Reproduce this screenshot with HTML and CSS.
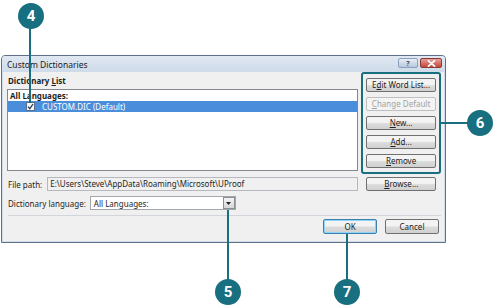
FILE: index.html
```html
<!DOCTYPE html>
<html lang="en">
<head>
    <meta charset="UTF-8">
    <meta name="viewport" content="width=device-width, initial-scale=1.0">
    <title>Custom Dictionaries</title>
    <link rel="stylesheet" href="styles.css">
</head>
<body>
    <div class="page">
        <div class="dialog">
            <div class="titlebar">
                <span class="title">Custom Dictionaries</span>
                <div class="caption-btns">
                    <span class="cap help">?</span>
                    <span class="cap close">
                        <svg width="9" height="7" viewBox="0 0 9 7"><path d="M1.5 0.8 L7.5 6.2 M7.5 0.8 L1.5 6.2" stroke="#fff" stroke-width="1.8" stroke-linecap="round"/></svg>
                    </span>
                </div>
            </div>

            <div class="client">
                <div class="main">
                    <div class="left">
                        <div class="group-label">Dictionary <u>L</u>ist</div>
                        <div class="listbox">
                            <div class="list-head">All Languages:</div>
                            <div class="list-item selected">
                                <span class="check">
                                    <svg width="7" height="7" viewBox="0 0 7 7"><path d="M1 3.6 L2.8 5.6 L6 1" fill="none" stroke="#2b3a55" stroke-width="1.3"/></svg>
                                </span>
                                CUSTOM.DIC (Default)
                            </div>
                        </div>
                    </div>
                    <div class="side">
                        <button class="btn">E<u>d</u>it Word List...</button>
                        <button class="btn" disabled><u>C</u>hange Default</button>
                        <button class="btn"><u>N</u>ew...</button>
                        <button class="btn"><u>A</u>dd...</button>
                        <button class="btn"><u>R</u>emove</button>
                    </div>
                </div>

                <div class="row path-row">
                    <span class="label">File path:</span>
                    <div class="field readonly">E:\Users\Steve\AppData\Roaming\Microsoft\UProof</div>
                    <button class="btn browse"><u>B</u>rowse...</button>
                </div>

                <div class="row lang-row">
                    <span class="label">Dictionary language:</span>
                    <div class="select">
                        <span class="select-text">All Languages:</span>
                        <span class="drop">
                            <svg width="5" height="3" viewBox="0 0 5 3"><path d="M0 0 H5 L2.5 3 Z" fill="#222"/></svg>
                        </span>
                    </div>
                </div>

                <div class="sep"></div>

                <div class="footer">
                    <button class="btn ok">OK</button>
                    <button class="btn">Cancel</button>
                </div>
            </div>
        </div>

        <!-- callouts -->
        <div class="line line-4"></div>
        <div class="callout c4">4</div>
        <div class="line line-6"></div>
        <div class="callout c6">6</div>
        <div class="line line-5"></div>
        <div class="callout c5">5</div>
        <div class="line line-7"></div>
        <div class="callout c7">7</div>
    </div>
</body>
</html>
```

FILE: styles.css
```css
body {
    margin: 0;
    background: #fff;
    font-family: "Noto Sans", "Open Sans", sans-serif;
    font-size: 8px;
    color: #1e1e1e;
}
.page {
    position: relative;
    width: 500px;
    height: 308px;
    overflow: hidden;
    padding-top: 55px;
    box-sizing: border-box;
}
.dialog {
    margin-left: 1px;
    width: 445px;
    height: 188px;
    box-sizing: border-box;
    border: 1px solid #5f7088;
    border-radius: 4px 4px 0 0;
    background: #f0f0f0;
    box-shadow: inset 0 0 0 1px #d3dde9;
    display: flex;
    flex-direction: column;
}
.titlebar {
    height: 16px;
    display: flex;
    align-items: center;
    justify-content: space-between;
    padding: 0 3px 0 5px;
    background: linear-gradient(#e0e8f2, #cfdbea);
    border-radius: 3px 3px 0 0;
}
.title {
    font-size: 8.5px;
    color: #1a1a1a;
}
.caption-btns {
    display: flex;
    gap: 2px;
    margin-top: -2px;
}
.cap {
    height: 10px;
    border-radius: 2px;
    display: flex;
    align-items: center;
    justify-content: center;
    box-sizing: border-box;
}
.help {
    width: 20px;
    background: linear-gradient(#e8eef6, #b8c9de);
    border: 1px solid #8aa0bc;
    color: #3b4b60;
    font-size: 7px;
    font-weight: bold;
}
.close {
    width: 22px;
    background: linear-gradient(#e6a29a, #c6463a);
    border: 1px solid #8a3a35;
}
.client {
    flex: 1;
    padding: 0 4px 0 5px;
    display: flex;
    flex-direction: column;
}
.main {
    display: flex;
    height: 102px;
}
.left {
    width: 352px;
    display: flex;
    flex-direction: column;
}
.group-label {
    font-weight: bold;
    height: 16px;
    line-height: 16px;
    padding: 0 0 0 1px;
    margin-top: 1px;
}
.listbox {
    height: 82px;
    box-sizing: border-box;
    border: 1px solid #828790;
    background: #fff;
}
.list-head {
    font-weight: bold;
    height: 11px;
    line-height: 11px;
    padding-left: 2px;
}
.list-item {
    height: 11px;
    display: flex;
    align-items: center;
    padding-left: 18px;
}
.selected {
    background: #4a8edb;
    color: #fff;
}
.check {
    width: 7px;
    height: 7px;
    border: 1px solid #5e6f88;
    background: #f4f6fa;
    margin-right: 7px;
    display: flex;
}
.side {
    margin-left: 3px;
    width: 80px;
    box-sizing: border-box;
    border: 2px solid #176f7f;
    border-radius: 3px;
    padding: 4px 3px;
    display: flex;
    flex-direction: column;
    gap: 5px;
}
.btn {
    font-family: inherit;
    font-size: 8px;
    color: #1e1e1e;
    height: 14px;
    padding: 0;
    border: 1px solid #707070;
    border-radius: 2px;
    background: linear-gradient(#f3f3f3 45%, #dcdcdc 55%, #d0d0d0);
    line-height: 12px;
    cursor: pointer;
}
.btn:disabled {
    color: #a3a3a3;
    border-color: #bfbfbf;
    background: #f4f4f4;
}
.row {
    display: flex;
    align-items: center;
    height: 14px;
}
.path-row {
    margin-top: 3px;
}
.label {
    padding-left: 1px;
}
.field {
    margin-left: 5px;
    width: 311px;
    height: 14px;
    box-sizing: border-box;
    border: 1px solid #b5b8be;
    padding-left: 2px;
    line-height: 12px;
    white-space: nowrap;
}
.readonly {
    background: #f0f0f0;
}
.browse {
    width: 70px;
    margin-left: 8px;
}
.lang-row {
    margin-top: 5px;
}
.select {
    margin-left: 4px;
    width: 146px;
    height: 14px;
    box-sizing: border-box;
    border: 1px solid #a2a6ad;
    background: #fff;
    display: flex;
    align-items: center;
    justify-content: space-between;
}
.select-text {
    padding-left: 3px;
}
.drop {
    width: 12px;
    height: 12px;
    box-sizing: border-box;
    border: 1px solid #8a8f96;
    background: linear-gradient(#f4f4f4, #d6d6d6);
    display: flex;
    align-items: center;
    justify-content: center;
}
.sep {
    margin: 5px 0 0 1px;
    height: 1px;
    width: 433px;
    background: #d2d6dc;
}
.footer {
    display: flex;
    justify-content: flex-end;
    gap: 8px;
    margin-top: 3px;
    padding-right: 2px;
}
.footer .btn {
    width: 54px;
    height: 15px;
}
.ok {
    border-color: #3c7fb1;
    box-shadow: inset 0 0 0 1px #8fd3f5;
}

/* callouts */
.callout {
    position: absolute;
    width: 26px;
    height: 26px;
    border-radius: 50%;
    background: #176f7f;
    color: #fff;
    font-family: "Roboto", "Liberation Sans", sans-serif;
    font-weight: bold;
    font-size: 15px;
    line-height: 26px;
    text-align: center;
}
.line {
    position: absolute;
    background: #176f7f;
}
.c4 { left: 18px; top: 3px; }
.line-4 { left: 29px; top: 20px; width: 2px; height: 83px; }
.c6 { left: 467px; top: 110px; }
.line-6 { left: 441px; top: 122px; width: 30px; height: 2px; }
.c5 { left: 215px; top: 279px; }
.line-5 { left: 227px; top: 210px; width: 2px; height: 74px; }
.c7 { left: 334px; top: 279px; }
.line-7 { left: 346px; top: 234px; width: 2px; height: 50px; }
```
